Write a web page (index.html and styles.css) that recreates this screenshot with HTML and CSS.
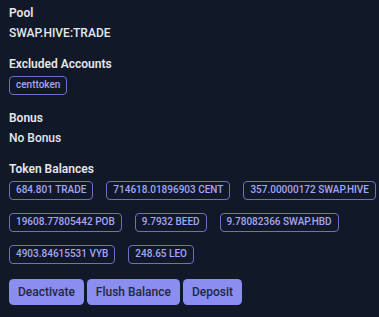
FILE: index.html
```html
<!DOCTYPE html>
<html lang="en">
<head>
  <meta charset="UTF-8">
  <title>Pool Details</title>
  <link rel="stylesheet" href="styles.css">
</head>
<body>

<div class="pool-card">
  <div class="field">
    <div class="field-label">Pool</div>
    <div class="field-value">SWAP.HIVE:TRADE</div>
  </div>

  <div class="field">
    <div class="field-label">Excluded Accounts</div>
    <div class="badge-list">
      <span class="badge">centtoken</span>
    </div>
  </div>

  <div class="field">
    <div class="field-label">Bonus</div>
    <div class="field-value">No Bonus</div>
  </div>

  <div class="field">
    <div class="field-label">Token Balances</div>
    <div class="badge-list">
      <span class="badge">684.801 TRADE</span>
      <span class="badge">714618.01896903 CENT</span>
      <span class="badge">357.00000172 SWAP.HIVE</span>
      <span class="badge">19608.77805442 POB</span>
      <span class="badge">9.7932 BEED</span>
      <span class="badge">9.78082366 SWAP.HBD</span>
      <span class="badge">4903.84615531 VYB</span>
      <span class="badge">248.65 LEO</span>
    </div>
  </div>

  <div class="actions">
    <button class="btn">Deactivate</button>
    <button class="btn">Flush Balance</button>
    <button class="btn">Deposit</button>
  </div>
</div>

</body>
</html>
```

FILE: styles.css
```css
:root {
  --bg: #111827;
  --text: #e5e7eb;
  --badge-border: #6e70c8;
  --badge-text: #a3a6f5;
  --btn-bg: #8b8df0;
}
* { margin: 0; padding: 0; box-sizing: border-box; }
body {
  font-family: 'Roboto', 'Liberation Sans', sans-serif;
  background: var(--bg);
  color: var(--text);
  min-height: 100vh;
}
.pool-card {
  padding: 5.4px 0 10px 9px;
}
.field {
  margin-bottom: 15.5px;
}
.field-label {
  font-size: 12px;
  font-weight: 600;
  line-height: 16px;
  margin-bottom: 3.5px;
}
.field-value {
  font-size: 12px;
  font-weight: 500;
  line-height: 16px;
}
.badge-list {
  display: flex;
  flex-wrap: wrap;
  column-gap: 13px;
  row-gap: 13px;
}
.badge {
  font-size: 10px;
  font-weight: 500;
  line-height: 12px;
  padding: 2.5px 6px;
  border: 1px solid var(--badge-border);
  border-radius: 4px;
  color: var(--badge-text);
}
.actions {
  display: flex;
  gap: 3px;
}
.btn {
  font-family: inherit;
  font-size: 12px;
  font-weight: 500;
  line-height: 16px;
  padding: 5px 9px;
  border: none;
  border-radius: 4.5px;
  background: var(--btn-bg);
  color: #1f2937;
  cursor: pointer;
}
.btn:hover { background: #a5b4fc; }
```
